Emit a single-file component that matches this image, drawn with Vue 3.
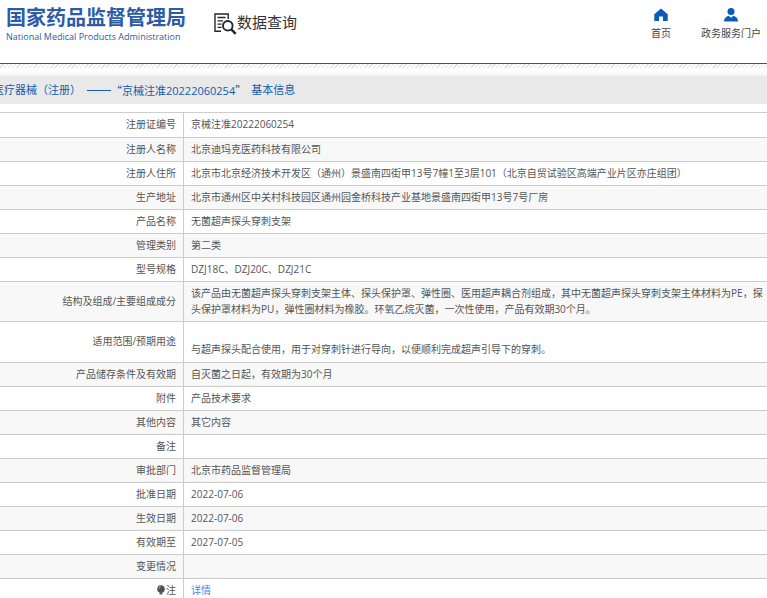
<script setup>
const rows = [
  { label: '注册证编号', value: '京械注准20222060254' },
  { label: '注册人名称', value: '北京迪玛克医药科技有限公司' },
  { label: '注册人住所', value: '北京市北京经济技术开发区（通州）景盛南四街甲13号7幢1至3层101（北京自贸试验区高端产业片区亦庄组团）' },
  { label: '生产地址', value: '北京市通州区中关村科技园区通州园金桥科技产业基地景盛南四街甲13号7号厂房' },
  { label: '产品名称', value: '无菌超声探头穿刺支架' },
  { label: '管理类别', value: '第二类' },
  { label: '型号规格', value: 'DZJ18C、DZJ20C、DZJ21C' },
  { label: '结构及组成/主要组成成分', value: '该产品由无菌超声探头穿刺支架主体、探头保护罩、弹性圈、医用超声耦合剂组成，其中无菌超声探头穿刺支架主体材料为PE，探头保护罩材料为PU，弹性圈材料为橡胶。环氧乙烷灭菌，一次性使用，产品有效期30个月。' },
  { label: '适用范围/预期用途', value: '\n与超声探头配合使用，用于对穿刺针进行导向，以便顺利完成超声引导下的穿刺。', roomy: true },
  { label: '产品储存条件及有效期', value: '自灭菌之日起，有效期为30个月' },
  { label: '附件', value: '产品技术要求' },
  { label: '其他内容', value: '其它内容' },
  { label: '备注', value: '' },
  { label: '审批部门', value: '北京市药品监督管理局' },
  { label: '批准日期', value: '2022-07-06' },
  { label: '生效日期', value: '2022-07-06' },
  { label: '有效期至', value: '2027-07-05' },
  { label: '变更情况', value: '' },
  { label: '注', value: '详情', link: true },
]
</script>

<template>
  <div class="page">
    <header class="header">
      <div class="brand">
        <div class="brand-cn">国家药品监督管理局</div>
        <div class="brand-en">National Medical Products Administration</div>
      </div>
      <div class="search-title">
        <svg class="search-icon" viewBox="0 0 23 22" fill="none" stroke="#26262e" aria-hidden="true">
          <path d="M7 18.300H1V1H14.200V6" stroke-width="1.400" />
          <path d="M3.500 4.500H11.500M3.500 7.800H9M3.500 11.100H7.500M3.500 14.400H7.500" stroke-width="1.300" />
          <circle cx="13.800" cy="12.800" r="4.800" stroke-width="1.900" />
          <path d="M17.300 16.300L21.700 20.800" stroke-width="2.500" />
        </svg>
        <span>数据查询</span>
      </div>
      <nav class="nav">
        <a class="nav-link" href="#home">
          <svg class="nav-icon" viewBox="0 0 14 14" fill="#0b5cb8" aria-hidden="true">
            <path d="M7 .5L.3 6.300V13H5V8.500H9V13H13.700V6.300Z" />
          </svg>
          <span>首页</span>
        </a>
        <a class="nav-link" href="#portal">
          <svg class="nav-icon" viewBox="0 0 14 14" fill="#0b5cb8" aria-hidden="true">
            <circle cx="7" cy="3.600" r="3.500" />
            <path d="M0 13.500C0 10.500 1.500 8.700 4.500 7.700L7 9.700L9.500 7.700C12.500 8.700 14 10.500 14 13.500Z" />
          </svg>
          <span>政务服务门户</span>
        </a>
      </nav>
    </header>
    <div class="hatch"></div>
    <h1 class="title">
      <span class="category">医疗器械（注册）</span>
      <span class="dash"></span>
      <span><span class="quote">“</span>京械注准20222060254<span class="quote">”</span></span>
      <span class="section">基本信息</span>
    </h1>
    <table class="info">
      <tbody>
        <tr v-for="row in rows" :key="row.label" :class="{ roomy: row.roomy }">
          <th scope="row">
            <svg v-if="row.link" class="bulb" viewBox="0 0 8 10" aria-hidden="true">
              <circle cx="4" cy="4" r="3.800" fill="#505050" />
              <path d="M2.500 7H5.500V9.500H2.500Z" fill="#606060" />
              <path d="M2 3.500Q2.200 2 3.600 1.800" fill="none" stroke="#ddd" stroke-width=".8" />
            </svg>{{ row.label }}
          </th>
          <td>
            <a v-if="row.link" class="detail" href="#detail">{{ row.value }}</a>
            <template v-else>{{ row.value }}</template>
          </td>
        </tr>
      </tbody>
    </table>
  </div>
</template>

<style>
body {
  margin: 0;
  background: #fff;
  overflow: hidden;
}
</style>

<style scoped>
.page {
  font-family: "Open Sans", "Noto Sans CJK SC", sans-serif;
  font-size: 10px;
  line-height: 16px;
  color: #555;
}
.header {
  display: flex;
  align-items: flex-start;
  box-sizing: border-box;
  height: 64px;
  padding: 6px 6px 0;
  border-bottom: 1px solid #1d6290;
}
.brand {
  color: #2c5ba8;
  white-space: nowrap;
}
.brand-cn {
  font-size: 20px;
  font-weight: 700;
  line-height: 24px;
}
.brand-en {
  font-size: 9px;
  font-weight: 500;
  line-height: 14px;
}
.search-title {
  display: flex;
  margin-left: 28px;
  padding-top: 7px;
  font-size: 15px;
  line-height: 18px;
  color: #333;
}
.search-icon {
  width: 23px;
  height: 22px;
}
.nav {
  display: flex;
  gap: 30px;
  margin-left: auto;
  padding-top: 2px;
}
.nav-link {
  display: flex;
  flex-direction: column;
  align-items: center;
  gap: 3px;
  color: #444;
  text-decoration: none;
}
.nav-icon {
  width: 14px;
  height: 14px;
}
.hatch {
  height: 12px;
  background:
    linear-gradient(transparent 4px, #fff 4px, #fff 7px, #f4f4f4 12px),
    repeating-linear-gradient(135deg, #fff 0, #fff 2px, #e2e2e2 2px, #e2e2e2 3px);
}
.title {
  display: flex;
  align-items: center;
  height: 28px;
  margin: 0 0 8px;
  font-size: 11px;
  font-weight: 400;
  white-space: nowrap;
  color: #145bb0;
  background: #e9e9e9;
}
.category {
  margin-left: -7px;
}
.dash {
  width: 24px;
  height: 1px;
  margin-left: 6px;
  background: #145bb0;
}
.quote {
  font-family: "Noto Sans CJK SC", sans-serif;
}
.section {
  margin-left: 5px;
}
.info {
  width: 100%;
  table-layout: fixed;
  border-collapse: separate;
  border-spacing: 0;
  border-top: 1px solid #ccc;
}
.info th,
.info td {
  box-sizing: border-box;
  height: 24px;
  padding: 3px 7px 4px;
  border-bottom: 1px solid #ccc;
  font-weight: 400;
  vertical-align: middle;
}
.info tr:first-child > *,
.info .roomy > * {
  padding-bottom: 5px;
}
.info th {
  width: 24%;
  border-right: 1px solid #ccc;
  text-align: right;
}
.info td {
  padding-right: 3px;
  text-align: left;
  white-space: pre-line;
}
.info tr:nth-child(even) {
  background: #f8f8f8;
}
.bulb {
  width: 8px;
  height: 10px;
  margin-right: 1px;
  vertical-align: -1px;
}
.detail {
  color: #2f8ef0;
  text-decoration: none;
}
</style>
